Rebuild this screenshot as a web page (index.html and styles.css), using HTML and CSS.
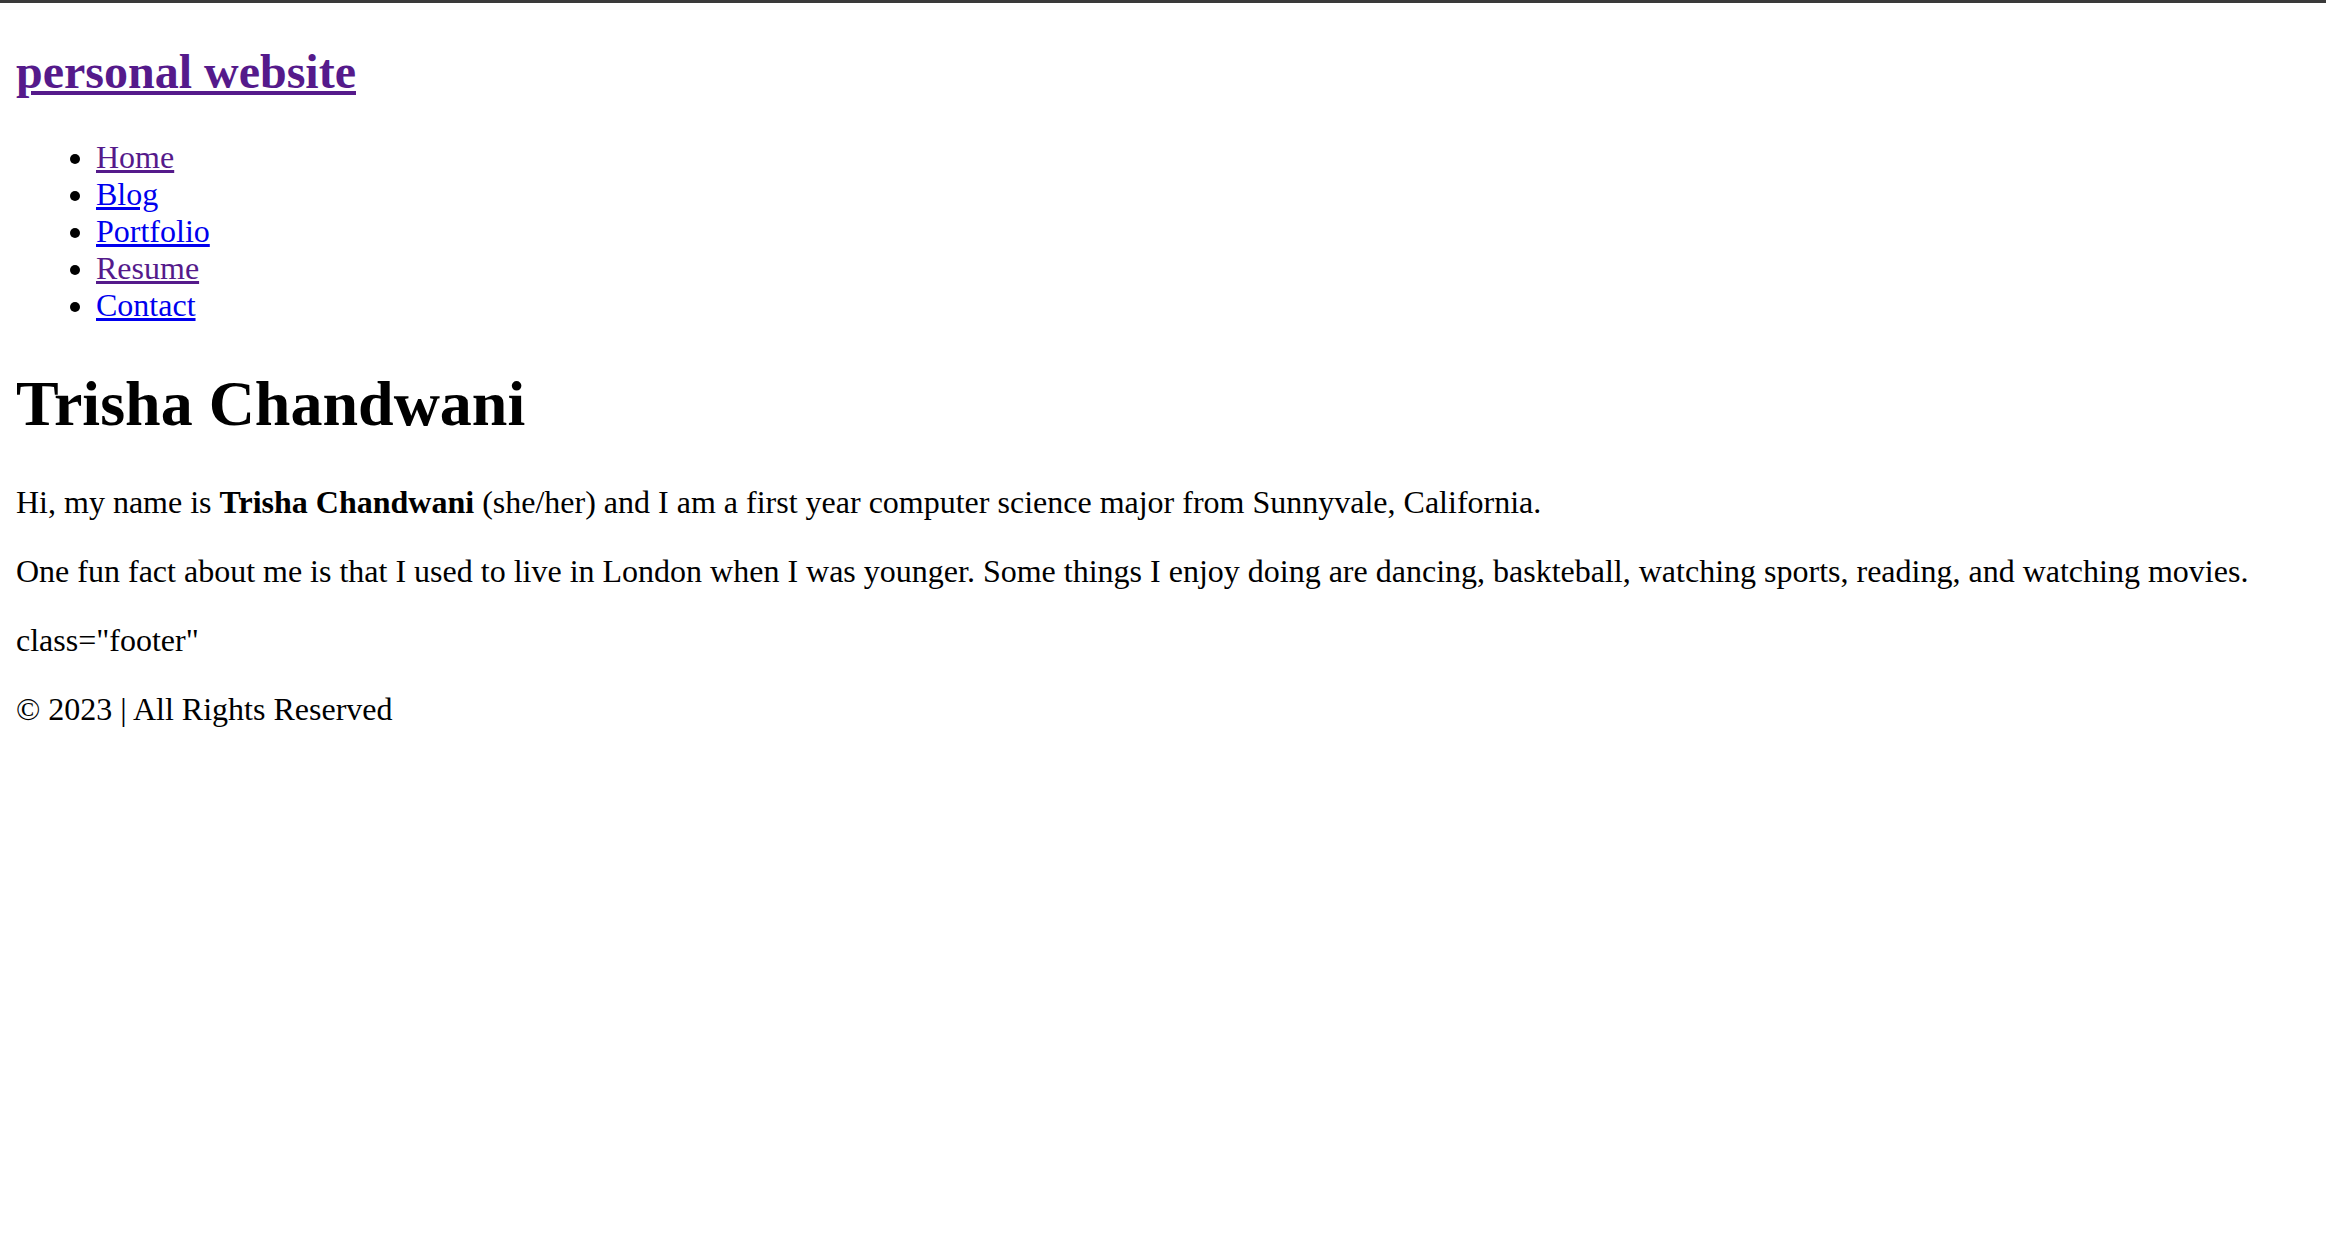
FILE: index.html
```html
<!DOCTYPE html>
<html lang="en">
<head>
<meta charset="utf-8">
<title>personal website</title>
<link rel="stylesheet" href="styles.css">
</head>
<body>
<div class="topbar"></div>
<header class="site-header">
  <h2 class="site-title"><a class="visited" href="#">personal website</a></h2>
  <ul class="nav">
    <li><a class="visited" href="#">Home</a></li>
    <li><a class="link" href="#">Blog</a></li>
    <li><a class="link" href="#">Portfolio</a></li>
    <li><a class="visited" href="#">Resume</a></li>
    <li><a class="link" href="#">Contact</a></li>
  </ul>
</header>
<main>
  <h1 class="name">Trisha Chandwani</h1>
  <p class="text">Hi, my name is <strong>Trisha Chandwani</strong> (she/her) and I am a first year computer science major from Sunnyvale, California.</p>
  <p class="text">One fun fact about me is that I used to live in London when I was younger. Some things I enjoy doing are dancing, baskteball, watching sports, reading, and watching movies.</p>
</main>
<p class="text">class="footer"</p>
<p class="text">© 2023 | All Rights Reserved</p>
</body>
</html>
```

FILE: styles.css
```css
html {
  background: #ffffff;
}
body {
  margin: 16px;
  font-family: "Liberation Serif", "Times New Roman", serif;
  font-size: 32px;
  color: #000000;
}
.topbar {
  position: fixed;
  top: 0;
  left: 0;
  right: 0;
  height: 3px;
  background: #3a3a3a;
}
.site-title {
  font-size: 48px;
  font-weight: bold;
  margin: 28px 0 39.84px;
}
.nav {
  margin: 32px 0;
  padding-left: 80px;
  list-style: disc;
}
.visited {
  color: #551a8b;
}
.link {
  color: #0000ee;
}
.name {
  font-size: 64px;
  font-weight: bold;
  margin: 42.88px 0;
}
.text {
  margin: 32px 0;
}
```
